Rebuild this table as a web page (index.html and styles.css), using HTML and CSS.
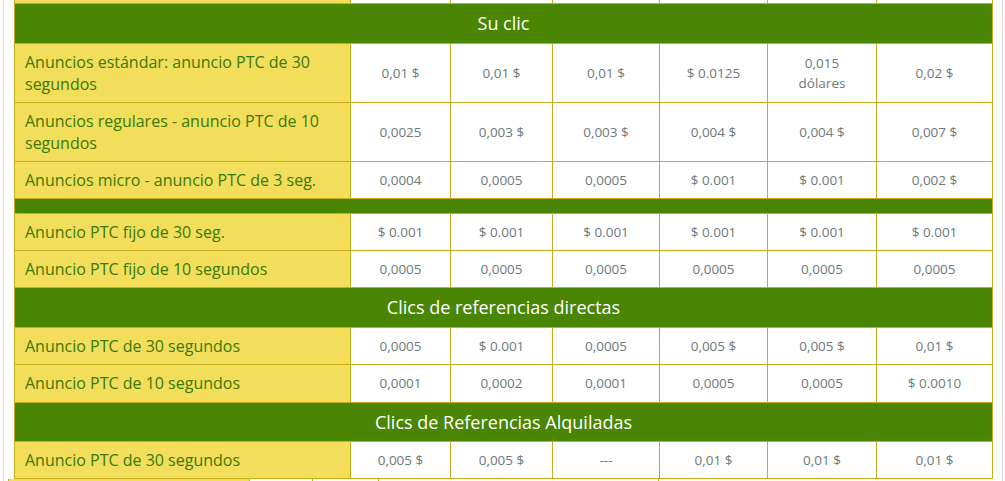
FILE: index.html
```html
<!DOCTYPE html>
<html lang="es">
<head>
<meta charset="utf-8">
<title>Tarifas PTC</title>
<link rel="stylesheet" href="styles.css">
</head>
<body>
<div class="page">
  <table class="rates">
    <colgroup>
      <col class="c-label">
      <col class="c1"><col class="c2"><col class="c3"><col class="c4"><col class="c5"><col class="c6">
    </colgroup>
    <tbody>
      <tr class="stub"><td class="label"></td><td></td><td></td><td></td><td></td><td></td><td></td></tr>
      <tr class="section"><th colspan="7">Su clic</th></tr>
      <tr class="double">
        <td class="label">Anuncios estándar: anuncio PTC de 30 segundos</td>
        <td>0,01 $</td><td>0,01 $</td><td>0,01 $</td><td>$ 0.0125</td><td>0,015 dólares</td><td>0,02 $</td>
      </tr>
      <tr class="double">
        <td class="label">Anuncios regulares - anuncio PTC de 10 segundos</td>
        <td>0,0025</td><td>0,003 $</td><td>0,003 $</td><td>0,004 $</td><td>0,004 $</td><td>0,007 $</td>
      </tr>
      <tr>
        <td class="label">Anuncios micro - anuncio PTC de 3 seg.</td>
        <td>0,0004</td><td>0,0005</td><td>0,0005</td><td>$ 0.001</td><td>$ 0.001</td><td>0,002 $</td>
      </tr>
      <tr class="section spacer"><th colspan="7"></th></tr>
      <tr>
        <td class="label">Anuncio PTC fijo de 30 seg.</td>
        <td>$ 0.001</td><td>$ 0.001</td><td>$ 0.001</td><td>$ 0.001</td><td>$ 0.001</td><td>$ 0.001</td>
      </tr>
      <tr>
        <td class="label">Anuncio PTC fijo de 10 segundos</td>
        <td>0,0005</td><td>0,0005</td><td>0,0005</td><td>0,0005</td><td>0,0005</td><td>0,0005</td>
      </tr>
      <tr class="section"><th colspan="7">Clics de referencias directas</th></tr>
      <tr>
        <td class="label">Anuncio PTC de 30 segundos</td>
        <td>0,0005</td><td>$ 0.001</td><td>0,0005</td><td>0,005 $</td><td>0,005 $</td><td>0,01 $</td>
      </tr>
      <tr class="tall">
        <td class="label">Anuncio PTC de 10 segundos</td>
        <td>0,0001</td><td>0,0002</td><td>0,0001</td><td>0,0005</td><td>0,0005</td><td>$ 0.0010</td>
      </tr>
      <tr class="section short"><th colspan="7">Clics de Referencias Alquiladas</th></tr>
      <tr>
        <td class="label">Anuncio PTC de 30 segundos</td>
        <td>0,005 $</td><td>0,005 $</td><td>---</td><td>0,01 $</td><td>0,01 $</td><td>0,01 $</td>
      </tr>
    </tbody>
  </table>
  <div class="next">
    <span class="next-label"></span><span class="next-cell w1"></span><span class="next-cell w2"></span><span class="next-cell w3"></span><span class="next-cell w4"></span>
  </div>
</div>
</body>
</html>
```

FILE: styles.css
```css
html, body {
  margin: 0;
  padding: 0;
  background: #ffffff;
}

body {
  font-family: "Open Sans", "DejaVu Sans", sans-serif;
  overflow: hidden;
}

.page {
  margin-left: 3px;
  width: 998px;
  border-left: 1px solid #dddddd;
  border-right: 1px solid #dddddd;
  height: 481px;
}

.rates {
  margin-left: 10px;
  width: 978px;
  table-layout: fixed;
  border-collapse: collapse;
}

.c-label { width: 336px; }
.c1 { width: 100px; }
.c2 { width: 102px; }
.c3 { width: 107px; }
.c4 { width: 108px; }
.c5 { width: 109px; }
.c6 { width: 116px; }

.rates td,
.rates th {
  border: 1px solid #c9ac1c;
  padding: 0 14px;
  vertical-align: middle;
}

.rates td {
  background: #ffffff;
  color: #6b7a79;
  font-size: 13.5px;
  line-height: 20px;
  text-align: center;
}

.rates td.label {
  background: #f2de5a;
  color: #3b790a;
  font-size: 16px;
  line-height: 22px;
  text-align: left;
  padding: 0 10px;
}

.rates tr { height: 37px; }
.rates tr.double { height: 59px; }
.rates tr.tall { height: 38px; }

.rates tr.stub { height: 3px; }
.rates tr.stub td {
  border-top: none;
  padding: 0;
  line-height: 0;
  font-size: 0;
}

.rates tr.section { height: 40px; }
.rates tr.section.short { height: 39px; }
.rates tr.section th {
  background: #4a8504;
  color: #ffffff;
  font-size: 18px;
  font-weight: 400;
  line-height: 24px;
  text-align: center;
}
.rates tr.spacer { height: 15px; }
.rates tr.spacer th { padding: 0; }

.next {
  display: flex;
  height: 3px;
  margin-left: 4px;
}
.next-label {
  width: 240px;
  background: #f2de5a;
  border-left: 1px solid #c9ac1c;
  border-right: 1px solid #c9ac1c;
}
.next-cell {
  border-right: 1px solid #c9ac1c;
  background: #ffffff;
}
.next-cell.w1 { width: 62px; }
.next-cell.w2 { width: 65px; }
.next-cell.w3 { width: 279px; }
.next-cell.w4 { width: 40px; border-right: none; }
```
